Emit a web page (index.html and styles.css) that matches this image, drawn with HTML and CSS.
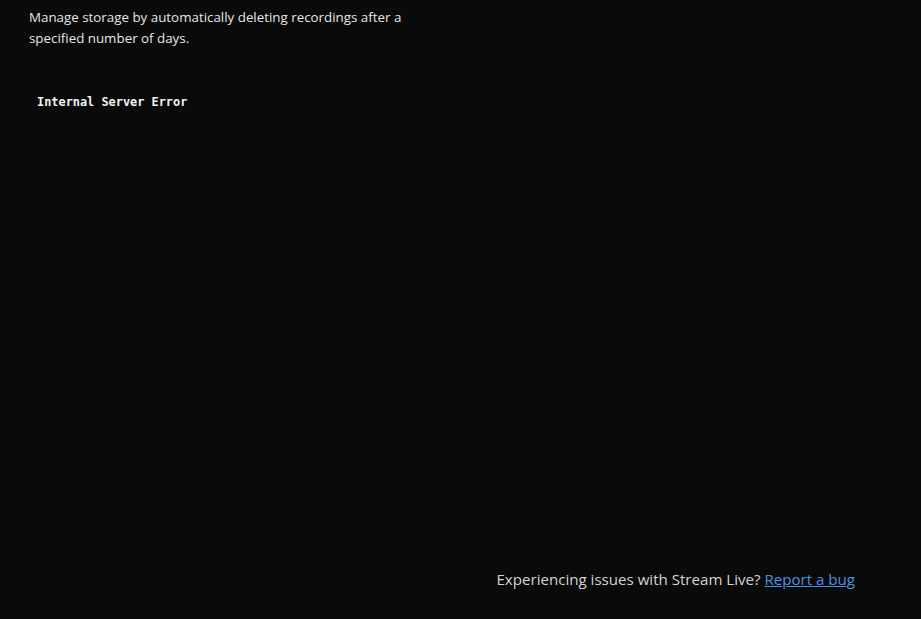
FILE: index.html
```html
<!DOCTYPE html>
<html>
<head>
<meta charset="utf-8">
<link rel="stylesheet" href="styles.css">
</head>
<body>
<div class="page">
  <main class="content">
    <p class="desc">Manage storage by automatically deleting recordings after a specified number of days.</p>
    <pre class="error">Internal Server Error</pre>
  </main>
  <footer class="footer">
    <span>Experiencing issues with Stream Live? <a href="#" class="link">Report a bug</a></span>
  </footer>
</div>
</body>
</html>
```
FILE: styles.css
```css
html, body {
  margin: 0;
  padding: 0;
  background: #0a0a0a;
  height: 100%;
}
.page {
  height: 619px;
  display: flex;
  flex-direction: column;
  font-family: "Open Sans", "Noto Sans", sans-serif;
}
.content {
  flex: 1;
  padding: 7px 0 0 29px;
}
.desc {
  margin: 0;
  width: 392px;
  font-size: 13.35px;
  line-height: 21px;
  color: #e6e6e6;
}
.error {
  margin: 45px 0 0 8px;
  font-family: "DejaVu Sans Mono", monospace;
  font-weight: bold;
  font-size: 11.9px;
  line-height: 16px;
  color: #f2f2f2;
}
.footer {
  display: flex;
  justify-content: flex-end;
  padding: 0 66px 29px 0;
  font-size: 15.1px;
  line-height: 22px;
  color: #d4d4d4;
}
.link {
  color: #4a90e2;
  text-decoration: underline;
}
```
